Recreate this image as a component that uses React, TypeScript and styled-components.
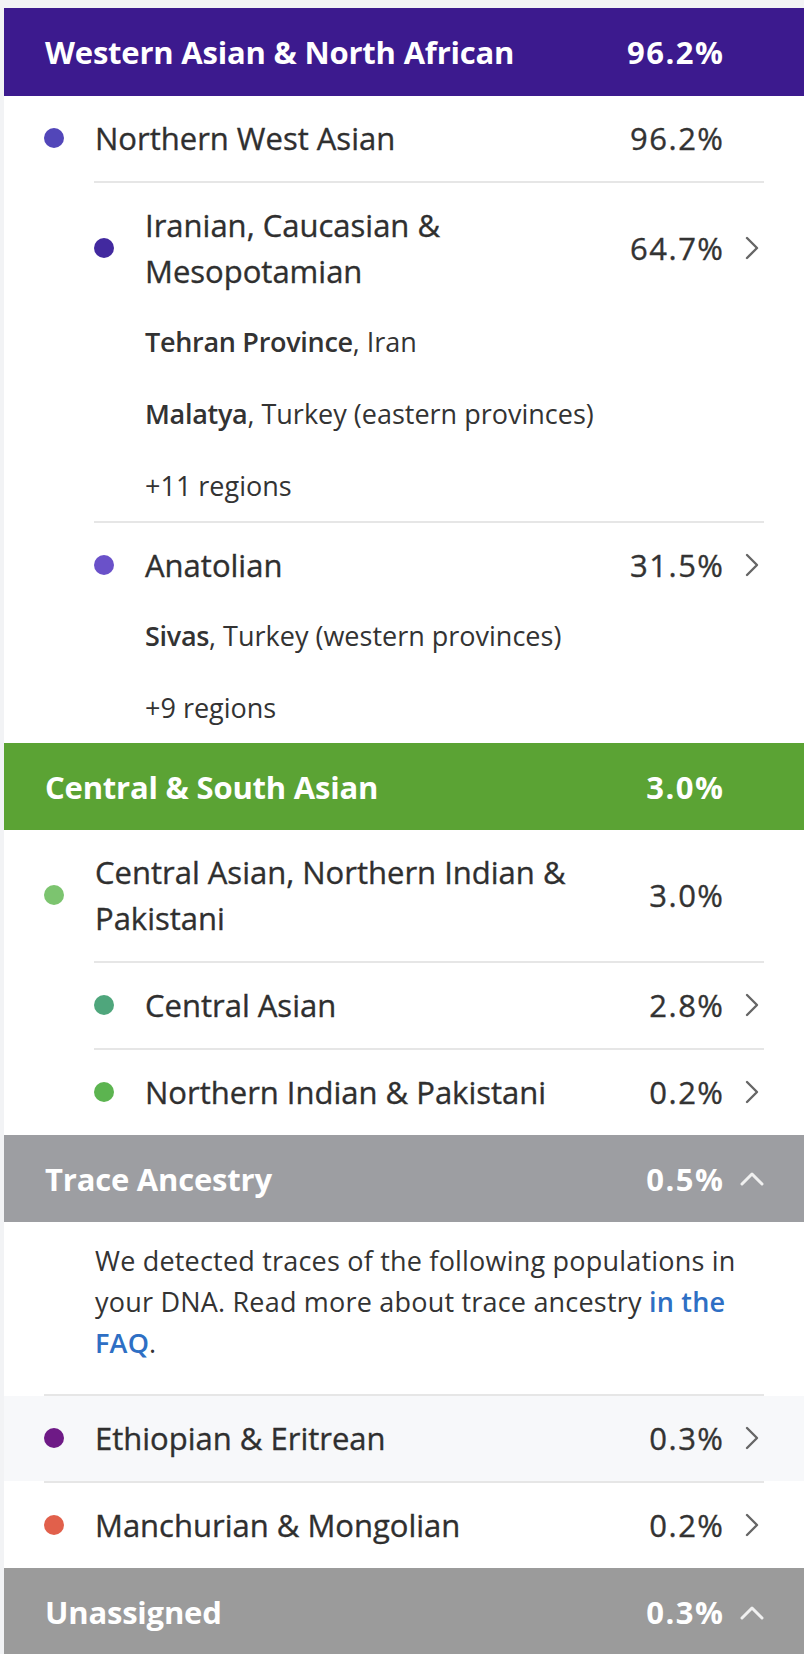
import React from "react";
import styled, { createGlobalStyle } from "styled-components";

const GlobalStyle = createGlobalStyle`
  html, body { margin: 0; padding: 0; }
  body {
    background: #f2f3f5;
    font-family: "Open Sans", Lato, "Liberation Sans", sans-serif;
    color: #333333;
    -webkit-font-smoothing: antialiased;
  }
`;

const Page = styled.div`
  padding: 8px 0 0 4px;
`;

const Card = styled.div`
  background: #ffffff;
  display: flex;
  flex-direction: column;
`;

const GroupHeader = styled.div<{ $bg: string; $h?: number }>`
  display: flex;
  align-items: center;
  height: ${(p) => p.$h ?? 87}px;
  padding: 0 40px 0 41px;
  background: ${(p) => p.$bg};
  color: #ffffff;
  font-size: 31px;
  font-weight: 700;
  letter-spacing: -0.2px;
`;

const HeaderTitle = styled.div`
  flex: 1;
`;

const Pct = styled.div`
  font-size: 31px;
  font-weight: 500;
  letter-spacing: 1.5px;
  margin-right: -1.5px;
  white-space: nowrap;
  -webkit-text-stroke: 0.35px currentColor;
`;

const HeaderPct = styled(Pct)`
  font-weight: 700;
  -webkit-text-stroke: 0;
`;

const IconBox = styled.div`
  width: 24px;
  margin-left: 17px;
  display: flex;
  align-items: center;
  justify-content: center;
  flex-shrink: 0;
`;

const Row = styled.div<{ $indent: number; $tight?: boolean; $bg?: string }>`
  display: flex;
  align-items: center;
  padding: 19px 40px ${(p) => (p.$tight ? 11 : 20)}px ${(p) => 40 + p.$indent}px;
  background: ${(p) => p.$bg ?? "transparent"};
`;

const Dot = styled.span<{ $color: string }>`
  width: 20px;
  height: 20px;
  border-radius: 50%;
  background: ${(p) => p.$color};
  margin-right: 31px;
  flex-shrink: 0;
`;

const Name = styled.div`
  flex: 1;
  font-size: 31px;
  font-weight: 500;
  line-height: 46px;
  padding-right: 40px;
  color: #2f2f2f;
  -webkit-text-stroke: 0.35px currentColor;
`;

const Divider = styled.div<{ $inset: number }>`
  height: 2px;
  background: #e6e6e6;
  margin: 0 40px 0 ${(p) => p.$inset}px;
`;

const LocationList = styled.div`
  display: flex;
  flex-direction: column;
  padding-left: 141px;
`;

const LocationItem = styled.div`
  height: 72px;
  display: flex;
  align-items: center;
  font-size: 27px;
  font-weight: 400;
  color: #333333;
`;

const Strong = styled.span`
  font-weight: 600;
  letter-spacing: -0.3px;
`;

const Note = styled.p`
  margin: 0;
  padding: 18px 40px 31px 91px;
  font-size: 27px;
  font-weight: 400;
  letter-spacing: 0.2px;
  line-height: 41px;
  color: #333333;
`;

const Link = styled.a`
  color: #2e6fc4;
  font-weight: 600;
  text-decoration: none;
`;

const Chevron = () => (
  <svg width="14" height="24" viewBox="0 0 14 24" fill="none">
    <path d="M2 2 L12 12 L2 22" stroke="#666666" strokeWidth="2.4" strokeLinecap="round" strokeLinejoin="round" />
  </svg>
);

const CaretUp = () => (
  <svg width="24" height="15" viewBox="0 0 24 15" fill="none">
    <path d="M2 13 L12 3 L22 13" stroke="#f0f0f0" strokeWidth="3" strokeLinecap="round" strokeLinejoin="round" />
  </svg>
);

type Loc = { strong: string; rest: string };

const Entry = ({
  color,
  name,
  pct,
  indent,
  chevron,
  locations,
  more,
  bg,
}: {
  color: string;
  name: string;
  pct: string;
  indent: number;
  chevron?: boolean;
  locations?: Loc[];
  more?: string;
  bg?: string;
}) => (
  <div>
    <Row $indent={indent} $tight={!!locations} $bg={bg}>
      <Dot $color={color} />
      <Name>{name}</Name>
      <Pct>{pct}</Pct>
      <IconBox>{chevron ? <Chevron /> : null}</IconBox>
    </Row>
    {locations && (
      <LocationList>
        {locations.map((l) => (
          <LocationItem key={l.strong}>
            <span>
              <Strong>{l.strong}</Strong>
              {l.rest}
            </span>
          </LocationItem>
        ))}
        {more && <LocationItem>{more}</LocationItem>}
      </LocationList>
    )}
  </div>
);

export default function App() {
  return (
    <>
      <GlobalStyle />
      <Page>
        <Card>
          <GroupHeader $bg="#3c1a8e" $h={88}>
            <HeaderTitle>Western Asian &amp; North African</HeaderTitle>
            <HeaderPct>96.2%</HeaderPct>
            <IconBox />
          </GroupHeader>

          <Entry color="#5246b9" name="Northern West Asian" pct="96.2%" indent={0} />
          <Divider $inset={90} />
          <Entry
            color="#42299f"
            name="Iranian, Caucasian & Mesopotamian"
            pct="64.7%"
            indent={50}
            chevron
            locations={[
              { strong: "Tehran Province", rest: ", Iran" },
              { strong: "Malatya", rest: ", Turkey (eastern provinces)" },
            ]}
            more="+11 regions"
          />
          <Divider $inset={90} />
          <Entry
            color="#6a51c9"
            name="Anatolian"
            pct="31.5%"
            indent={50}
            chevron
            locations={[{ strong: "Sivas", rest: ", Turkey (western provinces)" }]}
            more="+9 regions"
          />

          <GroupHeader $bg="#5ba334">
            <HeaderTitle>Central &amp; South Asian</HeaderTitle>
            <HeaderPct>3.0%</HeaderPct>
            <IconBox />
          </GroupHeader>

          <Entry color="#7cc46f" name="Central Asian, Northern Indian & Pakistani" pct="3.0%" indent={0} />
          <Divider $inset={90} />
          <Entry color="#4fa67c" name="Central Asian" pct="2.8%" indent={50} chevron />
          <Divider $inset={90} />
          <Entry color="#5cb450" name="Northern Indian & Pakistani" pct="0.2%" indent={50} chevron />

          <GroupHeader $bg="#9d9ea2">
            <HeaderTitle>Trace Ancestry</HeaderTitle>
            <HeaderPct>0.5%</HeaderPct>
            <IconBox>
              <CaretUp />
            </IconBox>
          </GroupHeader>

          <Note>
            We detected traces of the following populations in your DNA. Read more about trace ancestry{" "}
            <Link href="#">in the FAQ</Link>.
          </Note>
          <Divider $inset={40} />
          <Entry color="#6e1a86" name="Ethiopian & Eritrean" pct="0.3%" indent={0} chevron bg="#f7f8fa" />
          <Divider $inset={40} />
          <Entry color="#e1604b" name="Manchurian & Mongolian" pct="0.2%" indent={0} chevron />

          <GroupHeader $bg="#9b9b9b" $h={88}>
            <HeaderTitle>Unassigned</HeaderTitle>
            <HeaderPct>0.3%</HeaderPct>
            <IconBox>
              <CaretUp />
            </IconBox>
          </GroupHeader>
        </Card>
      </Page>
    </>
  );
}
